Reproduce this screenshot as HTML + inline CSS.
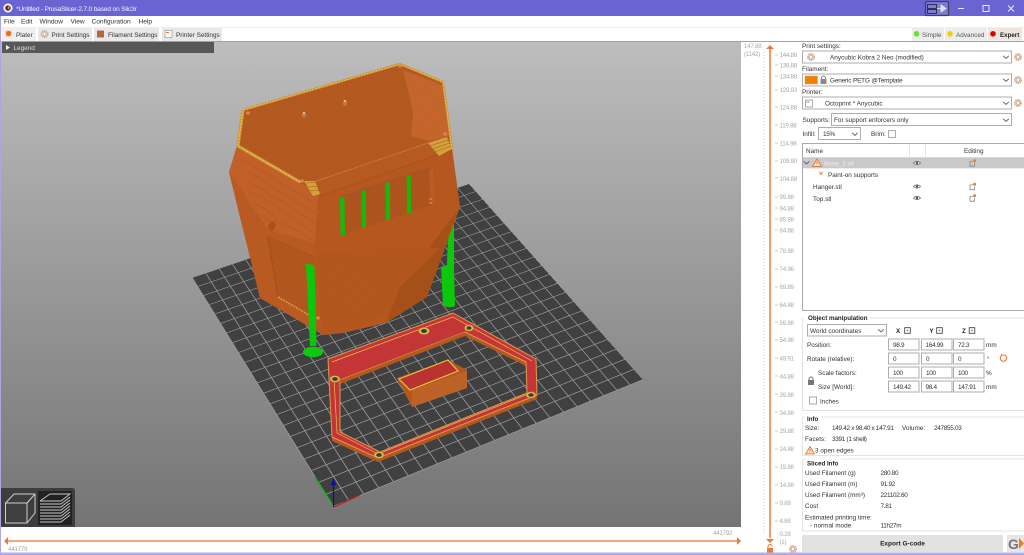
<!DOCTYPE html>
<html><head><meta charset="utf-8">
<style>
html,body{margin:0;padding:0;background:#fff;width:1024px;height:555px;overflow:hidden}
#wrap{position:relative;width:1024px;height:555px;overflow:hidden;background:#fff}
#cv{position:absolute;left:1px;top:42px;width:740px;height:485px;background:linear-gradient(#bdbdbd,#747474)}
#bed{position:absolute;left:0;top:0;width:220px;height:220px;transform-origin:0 0;
transform:matrix3d(1.65891,-0.42964,0,0.00038855,-0.49009,-0.82255,0,0.00078555,0,0,1,0,333,507,0,1);
background-color:#404040;
background-image:linear-gradient(#949494 .7px,transparent .7px),linear-gradient(90deg,#949494 .7px,transparent .7px);
background-size:10px 10px}
svg{position:absolute;left:0;top:0;filter:blur(.25px)}
text{font-family:"Liberation Sans",sans-serif;font-size:6.4px;fill:#333}
.b{font-weight:bold;fill:#222;font-size:6.2px}
.t{fill:#a8a8a8;font-size:6.2px;letter-spacing:-.25px}
.n{font-size:6.4px;letter-spacing:-.3px}
.box{fill:#fff;stroke:#adadad;stroke-width:1}
</style></head><body><div id="wrap">
<div id="cv"></div>
<div id="bed"></div>
<svg width="1024" height="555" viewBox="0 0 1024 555">
<defs>
<pattern id="mo" width="2.4" height="1.4" patternUnits="userSpaceOnUse" patternTransform="rotate(-18)"><rect width="2.4" height=".6" fill="#7a3208" opacity=".1"/></pattern>
<g id="gear"><circle r="3.2" fill="#e9d6c8" stroke="#c9a58c" stroke-width="1.6" stroke-dasharray="1.2 .8"/><circle r="1.5" fill="#fff" stroke="#cc9e7e" stroke-width=".6"/></g>
<g id="chev"><path d="M-2.8 -1.2L0 1.4L2.8 -1.2" fill="none" stroke="#555" stroke-width=".9"/></g>
<g id="eye"><path d="M-3.6 0Q0 -3.4 3.6 0Q0 3.4 -3.6 0Z" fill="#fff" stroke="#666" stroke-width=".8"/><circle r="1.2" fill="#555"/></g>
<g id="ed"><path d="M-3 -1.6H0M-3 -1.6V3.2H1.6V0" fill="none" stroke="#888" stroke-width=".8"/><circle cx="1.6" cy="-2.2" r="1.5" fill="#ed7a33"/></g>
<g id="warn"><path d="M0 -4L4.4 3.4H-4.4Z" fill="#fbe0cc" stroke="#e8732c" stroke-width=".9"/><path d="M0 -1.6V1" stroke="#e8732c" stroke-width=".9"/></g>
<g id="xb"><rect x="-2.8" y="-2.8" width="5.6" height="5.6" fill="#fff" stroke="#333" stroke-width=".8"/><rect x="-.8" y="-.8" width="1.6" height="1.6" fill="#888"/></g>
</defs>

<!-- axes -->
<path d="M334 507L315 477" stroke="#0bb30b" stroke-width="1.2"/>
<path d="M334 507L360 495" stroke="#d01010" stroke-width="1.2"/>
<path d="M333.5 507V483" stroke="#0a0aa8" stroke-width="1.2"/><path d="M333.5 478L336 485H331Z" fill="#0a0aa8"/>

<!-- right support behind body -->
<path d="M454 220L448 233L447 265L441 267L443 305Q449 309 455 306L454 270L454 237Z" fill="#0cc80c"/>

<!-- body -->
<path d="M237 146L229 172L260 298L323 335L343 333L427 297L460 207L452 148L443 82L400 63L243 110Z" fill="#b85a20"/>
<!-- left upper facet -->
<path d="M237 146L229 172L268 230L315 243L318 195L300 182Z" fill="#c46229"/>
<!-- left lower facet -->
<path d="M229 172L260 298L315 330L315 243L268 230Z" fill="#bb5c22"/>
<path d="M268 237L278 297L310 315L315 257Z" fill="#b4581f"/>
<path d="M268 237L278 297" stroke="#a0501a" stroke-width="1" fill="none"/>
<path d="M278 297L309 315" stroke="#d9a33c" stroke-width="1.6" stroke-dasharray="2 1" fill="none"/>
<path d="M268 237L315 257" stroke="#a5521c" stroke-width=".6" fill="none"/>
<circle cx="318" cy="318" r="1.6" fill="#d9a33c"/>
<!-- contour bands left -->
<g fill="none" stroke="#a85219" stroke-width=".9" opacity=".4">
<path d="M244 160Q280 182 316 204"/><path d="M246 170Q280 192 316 214"/><path d="M247 181Q278 198 316 224"/><path d="M249 192Q270 200 280 210Q300 222 315 234"/><path d="M252 204Q268 207 276 220Q296 230 314 241"/><path d="M256 216Q268 214 274 228"/>
</g>
<ellipse cx="272" cy="226" rx="3.500" ry="5" fill="#ab541d" transform="rotate(20 272 226)"/>
<!-- front face shading -->
<path d="M318 195L452 150L460 207L440 248L316 252Z" fill="#b8591f"/>
<path d="M386 323L427 297L458 210L400 287Z" fill="#a75119"/>
<path d="M316 252L323 335L343 333L386 323L400 287L440 248Z" fill="#b5581e"/>
<g fill="none" stroke="#c9682a" stroke-width=".8" opacity=".3">
<path d="M328 262Q352 268 380 300"/><path d="M326 275Q350 280 372 308"/><path d="M326 290Q345 296 362 316"/>
</g>
<!-- window -->
<path d="M340 197L433 167L435 204L343 235Z" fill="#b0551d"/>
<path d="M340 197L433 167" stroke="#7a5068" stroke-width=".6" stroke-dasharray="2 1"/>
<path d="M433 167L435 204L431 205L429 170Z" fill="#bd5e26"/>
<path d="M429 199h3M429 203h3" stroke="#e8c060" stroke-width=".8"/>
<!-- green bars -->
<path d="M340 197.5h4.4L345 235h-4.4Z M361.6 190.5h4.2L366 228h-4.2Z M385.7 182.5h4.2L390 220h-4.2Z M406.7 175.500h4L411 213h-4Z" fill="#0ec10e"/>
<!-- interior -->
<path d="M245 113L400 67L442 85L450 138L428 143L315 182L300 180L240 146Z" fill="#b65b20"/>
<path d="M403 70L442 85L449 136L430 141L411 136L413 112Z" fill="#c7672d"/>
<g fill="none" stroke="#c4642a" stroke-width=".8" opacity=".25">
<path d="M262 130Q330 100 400 80"/><path d="M268 142Q335 112 410 92"/><path d="M278 154Q340 124 412 106"/><path d="M290 166Q345 136 414 120"/>
</g>
<!-- ledge -->
<path d="M312 182L428 143L452 149L320 195Z" fill="#b95c22"/>
<path d="M320 196L452 150" stroke="#a95419" stroke-width=".7"/>
<path d="M315 181.500L428 143" stroke="#cc8048" stroke-width=".7"/>
<!-- holes -->
<ellipse cx="304" cy="115" rx="2.200" ry="2.800" fill="#c97a4c"/><circle cx="304" cy="113" r="1" fill="#e8e0d8"/>
<ellipse cx="345" cy="103" rx="2.200" ry="2.800" fill="#c97a4c"/><circle cx="345" cy="101" r="1" fill="#e8e0d8"/>
<!-- rim -->
<path d="M300 182L238 146L243 110" fill="none" stroke="#cf9a3a" stroke-width="3.200" stroke-linejoin="round"/>
<path d="M243 110L400 64L443 82L452 149" fill="none" stroke="#cb9038" stroke-width="2.400" stroke-linejoin="round"/>
<path d="M300 182L238 146L243 110L400 64L443 82L452 149" fill="none" stroke="#ecd060" stroke-width="1" stroke-dasharray="2 1"/>
<path d="M304 181L315 181L320 194L313 196Z" fill="#d8a63e"/>
<path d="M306 183l10-1M308 187l10-1M310 191l10-1" stroke="#a0601e" stroke-width=".6"/>
<path d="M428 143L447 137L452 149L439 156Z" fill="#d8a63e"/>
<path d="M430 146l18-6M432 149l18-6M435 152l16-6" stroke="#a0601e" stroke-width=".6"/>
<path d="M246 113a2 1.600 0 1 0 4 0a2 1.600 0 1 0 -4 0M398 66a2 1.600 0 1 0 4 0a2 1.600 0 1 0 -4 0M443 134a2 1.600 0 1 0 4 0a2 1.600 0 1 0 -4 0M300 181a2 1.600 0 1 0 4 0a2 1.600 0 1 0 -4 0" fill="#d98a55"/>
<path d="M237 146L229 172L260 298L323 335L343 333L427 297L460 207L452 148L443 82L400 63L243 110Z" fill="url(#mo)"/>

<!-- left support -->
<path d="M306 263L314.500 266L316.500 346L310 346Z" fill="#0cc80c"/>
<path d="M310 330h6M310 334h6M310 338h6M310 342h6" stroke="#0aa80a" stroke-width=".6"/>
<ellipse cx="313" cy="352" rx="10" ry="5.200" fill="#0ccb0c"/>

<!-- tray -->
<path fill-rule="evenodd" d="M328 363L453 317L536 363L537 399L378 462L332 441ZM340 384L465 336L526 366L527 397L380 456L340 436Z" fill="#b5581e"/>
<path fill-rule="evenodd" d="M328 359L453 313L536 359L537 395L378 458L332 437ZM340 380L465 332L526 362L527 393L380 452L340 432Z" fill="#c43636" stroke="#dc9a52" stroke-width="1"/>
<path d="M332 362L453 317L532 361" fill="none" stroke="#e5c050" stroke-width=".7"/>
<path d="M334 378L337 433M337 433L378 454L533 392" fill="none" stroke="#e5c050" stroke-width=".7"/>
<path d="M340 381.500L465 333.500" stroke="#b5581e" stroke-width="2.600"/>
<g fill="#e0b84a" stroke="#b5791f" stroke-width=".5"><ellipse cx="424" cy="331" rx="5.500" ry="3.600"/><ellipse cx="469" cy="328" rx="4.500" ry="3.200"/><ellipse cx="335" cy="379" rx="5" ry="3.400"/><ellipse cx="531" cy="395" rx="5" ry="3.200"/><ellipse cx="379" cy="455" rx="5" ry="3.400"/></g>
<g fill="#3a3a44"><ellipse cx="424" cy="331" rx="3" ry="2"/><ellipse cx="469" cy="328" rx="2.500" ry="1.800"/><ellipse cx="335" cy="379" rx="2.800" ry="1.900"/><ellipse cx="531" cy="395" rx="2.800" ry="1.800"/><ellipse cx="379" cy="455" rx="2.800" ry="1.900"/></g>
<!-- small box -->
<path d="M397 378L412 407L467 388L467 370L448 360Z" fill="#b5581e"/>
<path d="M412 390L412 407L467 388V371Z" fill="#bd6226"/>
<path d="M399 379L448 360L458 371L410 390Z" fill="#b8322f" stroke="#e8bd40" stroke-width="1.200"/>

<!-- view toolbar -->
<path d="M0 488H72Q75 488 75 491V527H0Z" fill="#3d3d3d"/>
<rect x="38" y="491" width="34" height="34" fill="#222"/>
<g fill="none" stroke="#cfcfcf" stroke-width="1">
<path d="M5.500 503L14 494H35V513L27 523M27 503L35 494"/>
<path d="M5.500 503H27V523H5.500Z" fill="#3f3f3f"/>
</g>
<g fill="none" stroke="#c8c8c8" stroke-width=".9">
<path d="M40 501L50 494H70L61 501H40M40 504H61L70 497M40 507H61L70 500M40 510H61L70 503M40 513H61L70 506M40 516H61L70 509M40 519H61L70 512M40 522H61L70 515"/>
</g>

<!-- legend -->
<rect x="2" y="42" width="212" height="11" fill="#575757"/>
<path d="M6 45v5l4-2.500Z" fill="#f0f0f0"/>
<text x="13.500" y="50" style="fill:#ddd">Legend</text>

<!-- title bar -->
<rect width="1024" height="16" fill="#6a64d2"/>
<circle cx="8" cy="8" r="4.500" fill="#fff"/><circle cx="8" cy="8" r="2.800" fill="#333"/><path d="M8 9.500a2.500 2.500 0 0 1 2-4l-.6 3.600Z" fill="#ee7a2a"/>
<text x="16" y="11" style="fill:#f0f0ff;font-size:6.8px;letter-spacing:-.27px">*Untitled - PrusaSlicer-2.7.0 based on Slic3r</text>
<rect x="925.500" y="1.500" width="23" height="14" rx="1" fill="#7f7ad8" stroke="#3e3e60" stroke-width="1.200"/>
<path d="M927.500 4.500h9v4h-9zM927.500 9.500h9v4h-9z" fill="none" stroke="#2f2f55" stroke-width="1"/>
<path d="M937 8.500H941M941 5v7l5-3.500Z" stroke="#eee" stroke-width=".8" fill="#ddd"/>
<path d="M958 8.500h6" stroke="#e8e8ff" stroke-width="1"/>
<rect x="983" y="5.500" width="6" height="6" fill="none" stroke="#e8e8ff" stroke-width="1"/>
<path d="M1008 5.500l6 6M1014 5.500l-6 6" stroke="#e8e8ff" stroke-width="1"/>

<!-- menu -->
<g><text x="4" y="23.500" style="font-size:6.6px">File</text><text x="21" y="23.500" style="font-size:6.6px">Edit</text><text x="39.500" y="23.500" style="font-size:6.6px">Window</text><text x="70.500" y="23.500" style="font-size:6.6px">View</text><text x="91.500" y="23.500" style="font-size:6.6px">Configuration</text><text x="138.500" y="23.500" style="font-size:6.6px">Help</text></g>
<rect y="27" width="1024" height="1" fill="#f0f0f0"/>

<!-- tabs -->
<rect x="2" y="28" width="34" height="13" fill="#f0f0f0"/><rect x="38" y="28" width="54" height="13" fill="#e8e8e8"/><rect x="94" y="28" width="65" height="13" fill="#e8e8e8"/><rect x="162" y="28" width="60" height="13" fill="#e8e8e8"/>
<rect x="5" y="30" width="7" height="7" fill="#f5d9c5"/><circle cx="8.500" cy="33.500" r="2.600" fill="#ea6d1e"/>
<use href="#gear" x="44.500" y="34"/>
<rect x="97" y="30.500" width="7" height="7" fill="#b3683b"/>
<rect x="165" y="30.500" width="7" height="7" fill="#fff" stroke="#999" stroke-width=".7"/><rect x="166" y="32" width="3" height="1" fill="#e8702a"/>
<text x="16" y="36.800">Plater</text><text x="51.500" y="36.800">Print Settings</text><text x="108" y="36.800">Filament Settings</text><text x="176" y="36.800">Printer Settings</text>
<rect x="0" y="41" width="1024" height="1" fill="#ef8a55"/>

<!-- mode -->
<rect x="912" y="28" width="32" height="12.500" fill="#ececec"/><rect x="945" y="28" width="42" height="12.500" fill="#ececec"/><rect x="988" y="28" width="34" height="12.500" fill="#efe5de"/>
<circle cx="916.500" cy="33.800" r="2.800" fill="#68e02c"/><circle cx="950" cy="33.800" r="2.800" fill="#f5d000"/><circle cx="993" cy="33.800" r="2.800" fill="#e00000"/>
<text x="922" y="36.800" style="fill:#555">Simple</text><text x="956" y="36.800" style="fill:#555">Advanced</text><text x="1000" y="36.800" class="b">Expert</text>

<!-- vertical slider -->
<path d="M764 46V533" stroke="#ccc" stroke-width="1" stroke-dasharray="1 2"/>
<path d="M770 46V538" stroke="#f08040" stroke-width="1.600"/>
<path d="M770 45L774 49H766Z" fill="#ee7a35"/><path d="M766 539H774L770 543Z" fill="#ee7a35"/>
<path d="M767 548h6v5h-6z" fill="#ee7a35"/><path d="M768 548v-1.500a2 2 0 0 1 4 0" fill="none" stroke="#ee7a35" stroke-width="1"/>
<use href="#gear" x="793" y="549"/>
<text x="744" y="48" class="t">147.88</text><text x="744" y="56" class="t">(1142)</text>
<g>
<text x="779.500" y="57" class="t">144.88</text><text x="779.500" y="67.500" class="t">139.88</text><text x="779.500" y="78.500" class="t">134.88</text><text x="779.500" y="92" class="t">129.93</text><text x="779.500" y="109.500" class="t">124.88</text><text x="779.500" y="127.500" class="t">119.88</text><text x="779.500" y="145.500" class="t">114.98</text><text x="779.500" y="163" class="t">109.90</text><text x="779.500" y="181" class="t">104.88</text><text x="779.500" y="199" class="t">99.88</text><text x="779.500" y="210.500" class="t">94.88</text><text x="779.500" y="221.500" class="t">89.88</text><text x="779.500" y="232.500" class="t">84.88</text><text x="779.500" y="253" class="t">78.88</text><text x="779.500" y="271" class="t">74.96</text><text x="779.500" y="289" class="t">69.89</text><text x="779.500" y="307" class="t">64.88</text><text x="779.500" y="325" class="t">59.88</text><text x="779.500" y="342" class="t">54.98</text><text x="779.500" y="360.500" class="t">49.91</text><text x="779.500" y="378.500" class="t">44.88</text><text x="779.500" y="397" class="t">39.88</text><text x="779.500" y="415" class="t">34.88</text><text x="779.500" y="433" class="t">29.88</text><text x="779.500" y="451" class="t">24.88</text><text x="779.500" y="469" class="t">19.88</text><text x="779.500" y="487" class="t">14.88</text><text x="779.500" y="505" class="t">9.88</text><text x="779.500" y="523" class="t">4.88</text><text x="779.500" y="536" class="t">0.28</text><text x="779.500" y="544" class="t">(1)</text>
</g>
<path d="M775 55h3M775 65h3M775 76h3M775 90h3M775 107h3M775 125h3M775 143h3M775 161h3M775 178h3M775 197h3M775 208h3M775 219h3M775 230h3M775 251h3M775 269h3M775 287h3M775 305h3M775 322h3M775 340h3M775 358h3M775 376h3M775 394h3M775 412h3M775 431h3M775 449h3M775 467h3M775 485h3M775 503h3M775 521h3" stroke="#bbb" stroke-width=".8"/>

<!-- horizontal slider -->
<path d="M7 541H737" stroke="#f08a55" stroke-width="1.400"/>
<path d="M4 541L8 537V545Z" fill="#ee7a35"/><path d="M737 537L741 541L737 545Z" fill="#ee7a35"/>
<text x="8" y="551" class="t">441779</text><text x="713" y="535" class="t">441792</text>

<!-- right panel -->
<text x="802" y="48">Print settings:</text>
<rect class="box" x="802.500" y="51" width="209" height="12"/>
<use href="#gear" x="811" y="57"/>
<text x="830" y="59.500">Anycubic Kobra 2 Neo (modified)</text><use href="#chev" x="1006" y="57"/><use href="#gear" x="1018" y="57"/>
<text x="802" y="71">Filament:</text>
<rect class="box" x="802.500" y="74" width="209" height="12"/>
<rect x="805" y="76" width="12.500" height="8" fill="#f58000" stroke="#aaa" stroke-width=".6"/>
<rect x="820.500" y="79" width="6" height="5" fill="#888"/><path d="M821.500 79v-1a2 2 0 0 1 4 0v1" fill="none" stroke="#888" stroke-width="1"/>
<text x="830" y="82.500" style="letter-spacing:-.15px">Generic PETG @Template</text><use href="#chev" x="1006" y="80"/><use href="#gear" x="1018" y="80"/>
<text x="802" y="94">Printer:</text>
<rect class="box" x="802.500" y="97" width="209" height="12"/>
<rect x="805.500" y="100" width="7" height="7" fill="#fff" stroke="#888" stroke-width=".7"/><rect x="806.500" y="101.500" width="3" height="1" fill="#e8702a"/>
<text x="825" y="105.500">Octoprint * Anycubic</text><use href="#chev" x="1006" y="103"/><use href="#gear" x="1018" y="103"/>
<text x="802.500" y="122">Supports:</text>
<rect class="box" x="831.500" y="113.500" width="180" height="12"/>
<text x="834" y="122">For support enforcers only</text><use href="#chev" x="1006" y="120"/>
<text x="802.500" y="136">Infill:</text>
<rect class="box" x="818.500" y="127.500" width="42" height="12"/>
<text x="823" y="136" class="n">15%</text><use href="#chev" x="855" y="134"/>
<text x="871" y="136">Brim:</text>
<rect class="box" x="888.500" y="130.500" width="7" height="7"/>

<!-- list -->
<rect x="802.500" y="143.500" width="222" height="167" fill="#fff" stroke="#aaa"/>
<path d="M909.500 144V157M925.500 144V157" stroke="#e6e6e6"/>
<text x="806" y="153">Name</text><text x="964" y="153">Editing</text>
<rect x="803" y="157.300" width="221" height="11" fill="#c9c9c9"/>
<use href="#chev" x="806.500" y="162.500"/><use href="#warn" x="817" y="163"/>
<text x="824" y="165.500" style="fill:#eee">Base_3.stl</text>
<use href="#eye" x="917" y="163"/><use href="#ed" x="973" y="163"/>
<path d="M819 171l2 1.500 2-1.500-1 4h-2Z" fill="#e8a070"/>
<text x="828" y="177">Paint-on supports</text>
<text x="813" y="189">Hanger.stl</text><text x="813" y="201">Top.stl</text>
<use href="#eye" x="917" y="186.500"/><use href="#eye" x="917" y="198"/>
<use href="#ed" x="973" y="186.500"/><use href="#ed" x="973" y="198"/>

<!-- object manip -->
<path d="M802.500 318V410.500H1024M870 318H1024" fill="none" stroke="#e2e2e2"/>
<text x="808" y="320" class="b">Object manipulation</text>
<rect class="box" x="807.500" y="324.500" width="79" height="11.500"/>
<text x="810" y="333">World coordinates</text><use href="#chev" x="881" y="330.500"/>
<text x="896" y="333" class="b">X</text><use href="#xb" x="907.500" y="330.500"/>
<text x="929.500" y="333" class="b">Y</text><use href="#xb" x="939.500" y="330.500"/>
<text x="962" y="333" class="b">Z</text><use href="#xb" x="972" y="330.500"/>
<text x="807" y="347">Position:</text><text x="807" y="361">Rotate (relative):</text><text x="818" y="375">Scale factors:</text><text x="818" y="389">Size [World]:</text>
<g>
<rect class="box" x="888.500" y="339" width="30.500" height="11"/><rect class="box" x="921.500" y="339" width="30.500" height="11"/><rect class="box" x="953.500" y="339" width="30.500" height="11"/>
<rect class="box" x="888.500" y="353" width="30.500" height="11"/><rect class="box" x="921.500" y="353" width="30.500" height="11"/><rect class="box" x="953.500" y="353" width="30.500" height="11"/>
<rect class="box" x="888.500" y="367" width="30.500" height="11"/><rect class="box" x="921.500" y="367" width="30.500" height="11"/><rect class="box" x="953.500" y="367" width="30.500" height="11"/>
<rect class="box" x="888.500" y="381" width="30.500" height="11"/><rect class="box" x="921.500" y="381" width="30.500" height="11"/><rect class="box" x="953.500" y="381" width="30.500" height="11"/>
</g>
<text x="893" y="347" class="n">98.9</text><text x="925.500" y="347" class="n">164.99</text><text x="958" y="347" class="n">72.3</text>
<text x="893" y="361" class="n">0</text><text x="926" y="361" class="n">0</text><text x="958" y="361" class="n">0</text>
<text x="893" y="375" class="n">100</text><text x="926" y="375" class="n">100</text><text x="958" y="375" class="n">100</text>
<text x="893" y="389" class="n">149.42</text><text x="925.500" y="389" class="n">98.4</text><text x="958" y="389" class="n">147.91</text>
<text x="986" y="347">mm</text><text x="987" y="361">°</text><text x="986" y="375">%</text><text x="986" y="389">mm</text>
<path d="M1001 356a3.200 3.200 0 1 0 3.500-1H1002.500" fill="none" stroke="#ed7a33" stroke-width="1.100"/><path d="M1000.500 353.500l2.500 1.300-1.500 2Z" fill="#ed7a33"/>
<rect x="808" y="380" width="6" height="5" fill="#777"/><path d="M809 380v-1a2 2 0 0 1 4 0v1" fill="none" stroke="#777"/>
<rect x="809.500" y="397" width="7" height="7" fill="#fff" stroke="#aaa"/>
<text x="820" y="403.500">Inches</text>

<!-- info -->
<path d="M802.500 417H1024M802.500 417V455.500H1024M802.500 459H1024M802.500 459V531H1024" fill="none" stroke="#e4e4e4"/>
<rect x="805" y="414" width="16" height="7" fill="#fff"/>
<text x="807" y="421" class="b">Info</text>
<text x="805" y="430">Size:</text><text x="832" y="430" class="n">149.42 x 98.40 x 147.91</text><text x="902" y="430">Volume:</text><text x="934" y="430" class="n">247855.03</text>
<text x="805" y="441">Facets:</text><text x="832" y="441" class="n">3391 (1 shell)</text>
<use href="#warn" x="810" y="450.500"/><text x="815" y="452.500">3 open edges</text>
<rect x="805" y="456" width="36" height="8" fill="#fff"/>
<text x="807" y="465.500" class="b">Sliced Info</text>
<text x="805" y="475">Used Filament (g)</text><text x="880.500" y="475" class="n">280.80</text>
<text x="805" y="486">Used Filament (m)</text><text x="880.500" y="486" class="n">91.92</text>
<text x="805" y="497">Used Filament (mm³)</text><text x="880.500" y="497" class="n">221102.60</text>
<text x="805" y="508">Cost</text><text x="880.500" y="508" class="n">7.81</text>
<text x="805" y="519.500">Estimated printing time:</text>
<text x="810" y="527.500">- normal mode</text><text x="880.500" y="527.500" class="n">11h27m</text>

<!-- export -->
<rect x="802" y="535" width="201" height="17" fill="#e2e2e2"/>
<text x="902.500" y="545.500" class="b" text-anchor="middle" style="font-size:6.500px">Export G-code</text>
<rect x="1007" y="535" width="17" height="17" fill="#e6e6e6"/>
<text x="1008" y="549" style="font-size:14px;font-weight:bold;fill:#777">G</text>
<path d="M1019 538L1024 543.500L1019 549Z" fill="#ee7a22"/>

<!-- window border -->
<path d="M.5 16V554.500H1024" fill="none" stroke="#aaa6e8" stroke-width="1"/>
<path d="M0 553.500H1024" stroke="#b0ace8" stroke-width="2"/>
</svg>
</div></body></html>
